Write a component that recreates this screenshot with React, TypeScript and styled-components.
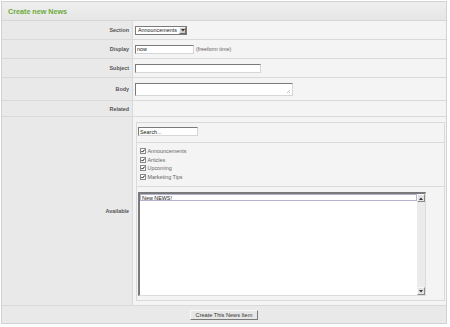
import React from 'react';
import styled, { createGlobalStyle } from 'styled-components';

const Global = createGlobalStyle`
  html, body { margin: 0; padding: 0; background: #ffffff; }
  body { font-family: "Liberation Sans", Arial, sans-serif; }
  * { box-sizing: border-box; }
`;

const FONT = `"Liberation Sans", Arial, sans-serif`;

const Panel = styled.div`
  width: 446px;
  margin: 1px 0 0 1px;
  border: 1px solid #d2d2d2;
  background: #f4f4f4;
`;

const Header = styled.div`
  height: 19px;
  border-bottom: 1px solid #d6d6d6;
  background: linear-gradient(#efefef, #e6e6e6);
  display: flex;
  align-items: center;
  padding-left: 6px;
  font: bold 7.2px ${FONT};
  color: #6bab3a;
`;

const Row = styled.div<{ $h: number }>`
  display: grid;
  grid-template-columns: 131px 1fr;
  height: ${(p) => p.$h + 1}px;
  border-bottom: 1px solid #d9d9d9;
`;

const Label = styled.div`
  background: #e9e9e9;
  border-right: 1px solid #d9d9d9;
  display: flex;
  align-items: center;
  justify-content: flex-end;
  padding-right: 3px;
  font: bold 5.4px ${FONT};
  color: #555;
`;

const Value = styled.div`
  display: flex;
  align-items: center;
  padding-left: 2px;
  gap: 2px;
  font: 5.4px ${FONT};
  color: #666;
`;

const AvailableValue = styled.div`
  padding: 5px 1px 4px 3px;
  display: flex;
  min-height: 0;
`;

const SelectBox = styled.div`
  width: 52px;
  height: 9px;
  border: 1px solid #7a7a7a;
  background: #fff;
  display: flex;
  align-items: center;
  justify-content: space-between;
  padding-left: 2px;
  font: 5.4px ${FONT};
  color: #222;
`;

const SelectArrow = styled.div`
  width: 7px;
  height: 7px;
  background: #d4d0c8;
  border-top: 1px solid #f4f4f4;
  border-left: 1px solid #f4f4f4;
  border-right: 1px solid #6a6a6a;
  border-bottom: 1px solid #6a6a6a;
  display: flex;
  align-items: center;
  justify-content: center;
`;

const TextInput = styled.input<{ $w: number }>`
  display: block;
  width: ${(p) => p.$w}px;
  height: 9px;
  margin: 0;
  padding: 0 1px;
  border-top: 1px solid #7a7a7a;
  border-left: 1px solid #7a7a7a;
  border-right: 1px solid #d6d6d6;
  border-bottom: 1px solid #d6d6d6;
  background: #fff;
  font: 5.4px ${FONT};
  color: #222;
  outline: none;
`;

const Area = styled.textarea`
  width: 158px;
  height: 13px;
  margin: 0;
  padding: 0 1px;
  border-top: 1px solid #7a7a7a;
  border-left: 1px solid #7a7a7a;
  border-right: 1px solid #d6d6d6;
  border-bottom: 1px solid #d6d6d6;
  background: #fff;
  font: 5.4px ${FONT};
  resize: none;
  display: block;
`;

const AreaWrap = styled.div`
  position: relative;
  display: flex;
`;

const Grip = styled.svg`
  position: absolute;
  right: 2px;
  bottom: 2px;
`;

const Hint = styled.span`
  font: 5.4px ${FONT};
  color: #666;
`;

const InnerBox = styled.div`
  flex: 1;
  border: 1px solid #dadada;
  display: flex;
  flex-direction: column;
  min-height: 0;
`;

const SearchSection = styled.div`
  padding: 4px 0 6px 1px;
  border-bottom: 1px solid #dadada;
  font-size: 0;
`;

const CheckSection = styled.div`
  padding: 4px 0 5px 3px;
  border-bottom: 1px solid #dadada;
  display: flex;
  flex-direction: column;
`;

const CheckRow = styled.div`
  height: 8.5px;
  display: flex;
  align-items: center;
  gap: 1.5px;
  font: 5.4px ${FONT};
  color: #666;
`;

const ListSection = styled.div`
  padding: 5px 0 4px 1px;
  flex: 1;
  font-size: 0;
`;

const ListBox = styled.div`
  width: 288px;
  height: 104px;
  border-top: 2px solid #7a7a7a;
  border-left: 2px solid #7a7a7a;
  border-right: 1px solid #dcdcdc;
  border-bottom: 1px solid #dcdcdc;
  background: #fff;
  display: flex;
`;

const Options = styled.div`
  flex: 1;
`;

const Option = styled.div<{ $focused?: boolean }>`
  height: 7px;
  line-height: 5px;
  padding-left: 1px;
  font: 5.4px ${FONT};
  color: #222;
  border: 1px solid ${(p) => (p.$focused ? '#b3b3cf' : 'transparent')};
`;

const ScrollBar = styled.div`
  width: 8px;
  background: #ebebeb;
  display: flex;
  flex-direction: column;
  justify-content: space-between;
`;

const ScrollButton = styled.div`
  height: 8px;
  background: #e2e2e2;
  border-top: 1px solid #f8f8f8;
  border-left: 1px solid #f8f8f8;
  border-right: 1px solid #8a8a8a;
  border-bottom: 1px solid #8a8a8a;
  display: flex;
  align-items: center;
  justify-content: center;
`;

const ButtonRow = styled.div`
  height: 17px;
  background: #e9e9e9;
  display: flex;
  align-items: center;
  justify-content: center;
`;

const Button = styled.button`
  width: 68px;
  height: 10px;
  margin: 0;
  padding: 0;
  background: #e6e6e6;
  border-top: 1px solid #f8f8f8;
  border-left: 1px solid #f8f8f8;
  border-right: 1px solid #7a7a7a;
  border-bottom: 1px solid #7a7a7a;
  font: 5.6px ${FONT};
  color: #333;
  line-height: 8px;
`;

const Check = () => (
  <svg width="6" height="6" viewBox="0 0 6 6">
    <rect x="0.5" y="0.5" width="5" height="5" fill="#fff" stroke="#8a8a8a" />
    <path d="M1.4 2.9 L2.5 4.1 L4.7 1.6" fill="none" stroke="#111" strokeWidth="1" />
  </svg>
);

const Tri = ({ up }: { up?: boolean }) => (
  <svg width="4" height="3" viewBox="0 0 4 3" style={{ display: 'block' }}>
    <path d={up ? 'M0 3 L2 0.5 L4 3 Z' : 'M0 0 L4 0 L2 2.5 Z'} fill="#333" />
  </svg>
);

const topics = ['Announcements', 'Articles', 'Upcoming', 'Marketing Tips'];

export default function App() {
  return (
    <>
      <Global />
      <Panel>
        <Header>Create new News</Header>
        <Row $h={18}>
          <Label>Section</Label>
          <Value>
            <SelectBox>
              <span>Announcements</span>
              <SelectArrow>
                <Tri />
              </SelectArrow>
            </SelectBox>
          </Value>
        </Row>
        <Row $h={18}>
          <Label>Display</Label>
          <Value>
            <TextInput $w={59} defaultValue="now" />
            <Hint>(freeform time)</Hint>
          </Value>
        </Row>
        <Row $h={18}>
          <Label>Subject</Label>
          <Value>
            <TextInput $w={126} defaultValue="" />
          </Value>
        </Row>
        <Row $h={22}>
          <Label>Body</Label>
          <Value>
            <AreaWrap>
              <Area defaultValue="" />
              <Grip width="5" height="5" viewBox="0 0 5 5">
                <path d="M4 1 L1 4 M4 3 L3 4" stroke="#aaa" strokeWidth="0.7" />
              </Grip>
            </AreaWrap>
          </Value>
        </Row>
        <Row $h={15}>
          <Label>Related</Label>
          <Value />
        </Row>
        <Row $h={188}>
          <Label>Available</Label>
          <AvailableValue>
            <InnerBox>
              <SearchSection>
                <TextInput $w={60} defaultValue="Search..." />
              </SearchSection>
              <CheckSection>
                {topics.map((t) => (
                  <CheckRow key={t}>
                    <Check />
                    <span>{t}</span>
                  </CheckRow>
                ))}
              </CheckSection>
              <ListSection>
                <ListBox>
                  <Options>
                    <Option $focused>New NEWS!</Option>
                  </Options>
                  <ScrollBar>
                    <ScrollButton>
                      <Tri up />
                    </ScrollButton>
                    <ScrollButton>
                      <Tri />
                    </ScrollButton>
                  </ScrollBar>
                </ListBox>
              </ListSection>
            </InnerBox>
          </AvailableValue>
        </Row>
        <ButtonRow>
          <Button>Create This News Item</Button>
        </ButtonRow>
      </Panel>
    </>
  );
}
